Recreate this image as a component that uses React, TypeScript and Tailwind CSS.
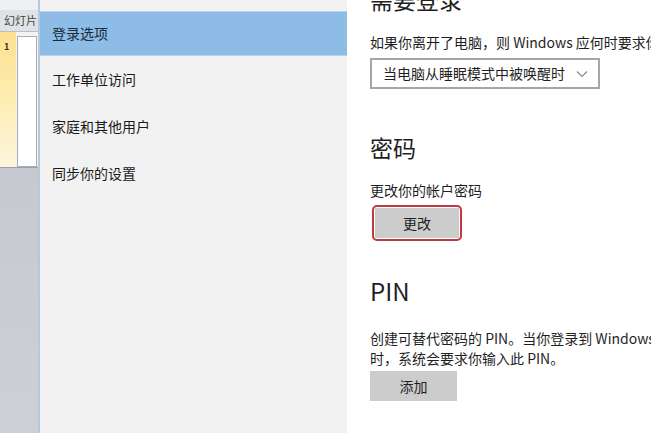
export default function App() {
  const font = { fontFamily: '"Noto Sans CJK SC", "Noto Sans", sans-serif' };
  return (
    <div
      className="flex h-[433px] w-[651px] overflow-hidden bg-white text-[#1f1f1f]"
      style={font}
    >
      {/* background app strip */}
      <div className="flex w-[38px] shrink-0 flex-col bg-[#c9cdd3]">
        <div className="h-[10px] bg-[#eef0f3]" />
        <div className="flex h-[22px] items-center border-b border-[#b9bec6] bg-[#dfe2e6] pl-[4px] text-[11px] leading-none text-[#444]">
          幻灯片
        </div>
        <div className="flex h-[136px] border-b border-[#9aa0a8] bg-[#f3f3f3]">
          <div className="w-[16px] bg-gradient-to-b from-[#fbe08e] via-[#fdeeb3] to-[#fbf5dd] pl-[4px] pt-[10px] text-[9px] font-bold leading-none text-[#333]">
            1
          </div>
          <div className="ml-[1px] mt-[4px] w-[20px] border border-[#a9adb3] bg-white" />
        </div>
        <div className="flex-1 bg-gradient-to-b from-[#c6cad0] to-[#cdd1d6]" />
      </div>
      <div className="w-[2px] shrink-0 bg-[#b7c8da]" />

      {/* settings nav */}
      <div className="w-[307px] shrink-0 bg-[#f2f2f2] pt-[11px] text-[14px] text-[#1a1a1a]">
        <div className="flex h-[45px] items-center border-y border-[#b5d3ee] bg-[#8dbde6] pl-[12px] text-[#1b2a3a]">
          登录选项
        </div>
        <div className="flex h-[47px] items-center pl-[12px]">工作单位访问</div>
        <div className="flex h-[47px] items-center pl-[12px]">家庭和其他用户</div>
        <div className="flex h-[47px] items-center pl-[12px]">同步你的设置</div>
      </div>

      {/* content */}
      <div className="relative flex-1 pl-[23px]">
        <div className="mt-[-16px] text-[23px] leading-[30px]">需要登录</div>
        <div className="mt-[18px] whitespace-nowrap text-[14px] leading-[20px]">
          如果你离开了电脑，则 Windows 应何时要求你重新登录?
        </div>
        <div className="mt-[6px] flex h-[31px] w-[230px] items-center justify-between border-2 border-[#a6a6a6] pl-[11px] pr-[10px] text-[14px]">
          <span>当电脑从睡眠模式中被唤醒时</span>
          <svg width="12" height="8" viewBox="0 0 12 8" fill="none">
            <path d="M1 1.5 6 6.5 11 1.5" stroke="#888" strokeWidth="1.1" />
          </svg>
        </div>

        <div className="mt-[43px] text-[23px] leading-[30px]">密码</div>
        <div className="mt-[18px] text-[14px] leading-[20px]">更改你的帐户密码</div>
        <div className="ml-[2px] mt-[5px] w-[90px] rounded-[5px] border-2 border-[#c0393f] p-[1px]">
          <div className="flex h-[30px] items-center justify-center bg-[#cccccc] text-[14px]">
            更改
          </div>
        </div>

        <div className="mt-[35px] text-[24px] leading-[30px]">PIN</div>
        <div className="mt-[22px] whitespace-nowrap text-[14px] leading-[20px]">
          创建可替代密码的 PIN。当你登录到 Windows 和应用
        </div>
        <div className="text-[14px] leading-[20px]">时，系统会要求你输入此 PIN。</div>
        <div className="mt-[3px] flex h-[30px] w-[87px] items-center justify-center bg-[#cccccc] text-[14px]">
          添加
        </div>

        <div className="absolute right-[2px] top-0 h-full w-px bg-[#ececec]" />
      </div>
    </div>
  );
}
